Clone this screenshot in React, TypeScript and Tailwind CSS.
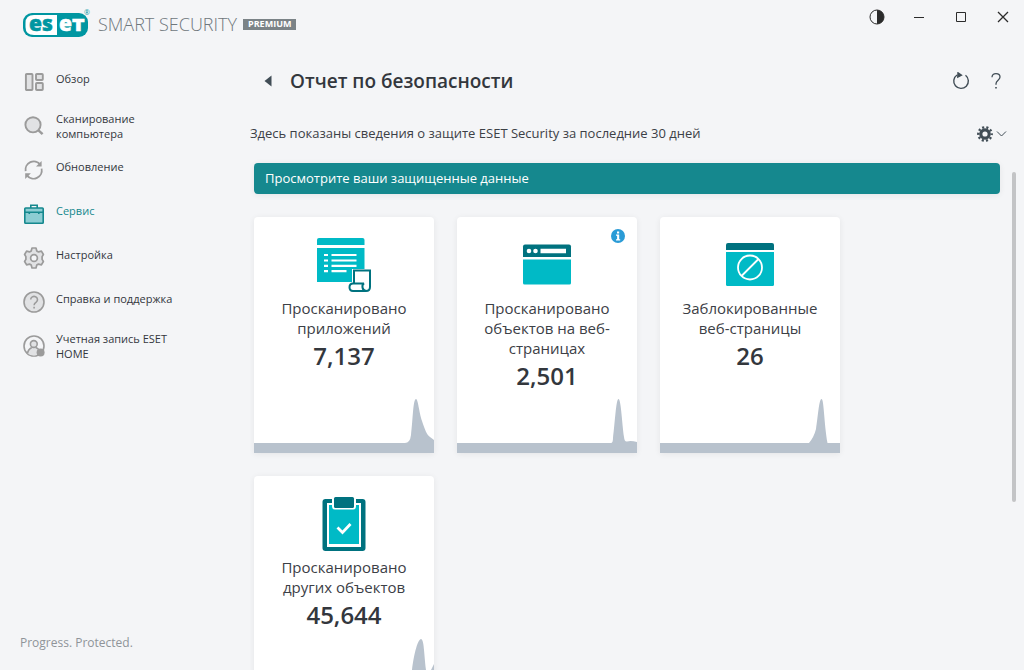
import React from 'react';
import clsx from 'clsx';

const OverviewIcon = () => (
  <svg viewBox="0 0 22 22" className="size-[22px]" fill="#e1e2e4" stroke="#9b9b9b" strokeWidth="1.9">
    <rect x="2.9" y="3" width="6.6" height="16" rx="0.8" />
    <rect x="13" y="3" width="6.8" height="6" rx="0.8" />
    <rect x="13" y="12" width="6.8" height="7" rx="0.8" />
  </svg>
);

const ScanIcon = () => (
  <svg viewBox="0 0 22 22" className="size-[22px]" fill="#e1e2e4" stroke="#9b9b9b">
    <circle cx="10" cy="9.8" r="7.6" strokeWidth="1.9" />
    <path d="M15.2 15.2l4.4 4" strokeWidth="2.5" />
  </svg>
);

const UpdateIcon = () => (
  <svg viewBox="0 0 22 22" className="size-[22px]" fill="none" stroke="#9b9b9b" strokeWidth="1.8">
    <path d="M2.6 12.2A8.3 8.3 0 0 1 17.3 5.6" />
    <path d="M18.6 9.6A8.3 8.3 0 0 1 3.9 16.4" />
    <path d="M18.6 2v5.6h-5.6z" fill="#9b9b9b" stroke="none" />
    <path d="M2.2 20v-5.8h5.7z" fill="#9b9b9b" stroke="none" />
  </svg>
);

const ToolsIcon = () => (
  <svg viewBox="0 0 22 22" className="size-[22px]" fill="#8ccdd3" stroke="#15888e" strokeWidth="1.6">
    <path d="M7.8 5V2.3h6.4V5" fill="none" />
    <rect x="1.8" y="5" width="18.4" height="15.2" rx="0.8" />
    <path d="M1.8 9.3h18.4M6.3 9.3v1.8M15.8 9.3v1.8" />
  </svg>
);

const SetupIcon = () => (
  <svg viewBox="0 0 22 22" className="size-[22px]" fill="#e1e2e4" stroke="#9b9b9b" strokeWidth="1.7" strokeLinejoin="round">
    <path d="M9 1h4l.8 2.9 1.7 1 2.9-.8 2 3.4-1.3 2.1v2.8l1.3 2.1-2 3.4-2.9-.8-1.7 1L13 21H9l-.8-2.9-1.7-1-2.9.8-2-3.4 1.3-2.1V9.6L1.6 7.5l2-3.4 2.9.8 1.7-1z" />
    <circle cx="11" cy="11" r="3.4" fill="#f4f5f7" />
  </svg>
);

const HelpIcon = () => (
  <svg viewBox="0 0 22 22" className="size-[22px]" fill="none" stroke="#9b9b9b" strokeWidth="1.6">
    <circle cx="11" cy="11" r="10" fill="#e1e2e4" />
    <path d="M7.7 8.6a3.4 3.2 0 1 1 5.5 2.5c-1.5 1-2.1 1.5-2.1 3.2" />
    <path d="M11.1 15.7v1.8" />
  </svg>
);

const AccountIcon = () => (
  <svg viewBox="0 0 22 22" className="size-[22px]" fill="none" stroke="#9b9b9b" strokeWidth="1.6">
    <circle cx="11" cy="11" r="10" />
    <path d="M4.5 18.6c.3-3 2-5 4.3-6.1h4c1.200.5 2.200 1.200 2.900 2l-2 5.500q-5 1.500-9.200-1.400z" fill="#e1e2e4" stroke="none" />
    <circle cx="10.800" cy="9" r="3.400" fill="#e1e2e4" />
    <path d="M4.500 18.600c.3-3 2-5 4.300-6.100M12.800 12.500c1.200.5 2.200 1.200 2.900 2" />
    <circle cx="17.600" cy="17.400" r="4" fill="#9b9b9b" stroke="none" />
  </svg>
);

const AppsIcon = () => (
  <svg viewBox="0 0 56 56" className="size-14">
    <path d="M1 8V3q0-2 2-2h43.500q2 0 2 2v5z" fill="#00bac6" />
    <path d="M1 11h47.500v21H36v13H1z" fill="#00bac6" />
    <path d="M8 18h4M8 23.500h4M8 28.800h4M8 34.200h4M15.500 18h25M15.500 23.500h25M15.500 28.800h25M15.500 34.200h15" stroke="#fff" strokeWidth="2.200" />
    <path d="M38 46.500V33.500h16V50q0 4-4 4H37q-3.500 0-3.500-3.700T37 46.500h11q-2 1-1.500 4t3.500 3.500" fill="#fff" stroke="#00727f" strokeWidth="2" />
  </svg>
);

const WebObjectsIcon = () => (
  <svg viewBox="0 0 56 56" className="size-14">
    <path d="M4 20V9.500q0-2 2-2h44q2 0 2 2V20z" fill="#00727f" />
    <path d="M4 22.500h48V46q0 1.500-1.500 1.500h-45Q4 47.500 4 46z" fill="#00bac6" />
    <circle cx="10" cy="14" r="2.300" fill="#fff" />
    <circle cx="16.500" cy="14" r="2.300" fill="#fff" />
    <path d="M21.500 11.800H47v4.400H21.500z" fill="#fff" />
  </svg>
);

const BlockedIcon = () => (
  <svg viewBox="0 0 56 56" className="size-14">
    <path d="M4 13V8q0-2 2-2h44q2 0 2 2v5z" fill="#00727f" />
    <path d="M4 15h48v32.500q0 1.500-1.500 1.500h-45Q4 49 4 47.500z" fill="#00bac6" />
    <g fill="none" stroke="#fff" strokeWidth="1.800">
      <circle cx="28" cy="30.500" r="12" />
      <path d="M19.500 39l17-17" />
    </g>
  </svg>
);

const OtherIcon = () => (
  <svg viewBox="0 0 56 56" className="size-14">
    <rect x="6.500" y="3" width="43" height="52" rx="3" fill="#00727f" />
    <path d="M11 7h34v44H11z" fill="#fff" />
    <path d="M13 9h30v39H13z" fill="#00bac6" />
    <path d="M16 1h24v9q0 3.500-3 3.500H19q-3 0-3-3.500z" fill="#fff" />
    <rect x="18" y="1" width="20" height="11" rx="1.500" fill="#00727f" />
    <path d="M21.500 31.500l5 5 8-8.500" fill="none" stroke="#fff" strokeWidth="2.800" />
  </svg>
);

const navItems = [
  { label: 'Обзор', icon: OverviewIcon },
  { label: 'Сканирование компьютера', icon: ScanIcon, twoLines: true },
  { label: 'Обновление', icon: UpdateIcon },
  { label: 'Сервис', icon: ToolsIcon, active: true },
  { label: 'Настройка', icon: SetupIcon },
  { label: 'Справка и поддержка', icon: HelpIcon },
  { label: 'Учетная запись ESET HOME', icon: AccountIcon, twoLines: true },
];

const cards = [
  {
    title: 'Просканировано приложений',
    value: '7,137',
    icon: AppsIcon,
    chartHeight: 54,
    chart: 'M0 44H151Q156 44 157 36C159 20 159 0 162 0C164 0 165 13 168 22C171 31 173 36 176 38L180 41V54H0Z',
  },
  {
    title: 'Просканировано объектов на веб-страницах',
    value: '2,501',
    icon: WebObjectsIcon,
    info: true,
    chartHeight: 54,
    chart: 'M0 44H154Q156 44 156 39C158 24 159 0 161.500 0C164 0 165 24 167 38Q167.500 43 170 42.500Q174 41.500 180 43V54H0Z',
  },
  {
    title: 'Заблокированные веб-страницы',
    value: '26',
    icon: BlockedIcon,
    chartHeight: 54,
    chart: 'M0 44H149Q154 38 156 30C158 18 159 0 161.500 0C164 0 164 24 167.500 44H180V54H0Z',
  },
  {
    title: 'Просканировано других объектов',
    value: '45,644',
    icon: OtherIcon,
    chartHeight: 73,
    chart: 'M0 63H150Q156 60 158 31C160 14 164 0 167 0C170 0 170 14 172 31L174 44L177 31L180 25V73H0Z',
  },
];

const Logo = () => (
  <svg viewBox="0 0 68 30" className="h-[30px] w-[68px]" role="img" aria-label="ESET">
    <rect x="0" y="4" width="65" height="24" rx="9" fill="#0096a1" />
    <path d="M34 6H11Q2.500 6 2.500 14v4Q2.500 26 11 26H34z" fill="#fff" />
    <g fontSize="21" fontWeight="800" fontFamily="Open Sans, sans-serif" strokeWidth="0.5">
      <text x="6" y="22" fill="#0096a1" stroke="#0096a1">es</text>
      <text x="36" y="22" fill="#fff" stroke="#fff">eт</text>
    </g>
    <text x="61" y="6" fontSize="7" fontFamily="Open Sans, sans-serif" fill="#0096a1">®</text>
  </svg>
);

const Header = () => (
  <header className="flex h-[50px] shrink-0 items-start justify-between pl-[23px]">
    <div className="flex h-12 items-center">
      <Logo />
      <span className="ml-[7px] text-[18px] text-[#6f777c] font-light">SMART SECURITY</span>
      <span className="ml-1.5 flex h-[11px] items-center bg-[#7b8387] px-[5px] text-[9px] font-bold text-white">PREMIUM</span>
    </div>
    <div className="flex h-[34px] items-center text-[#2b2b2b]">
      <button aria-label="Тема" className="flex w-[42px] justify-center">
        <svg viewBox="0 0 16 16" className="size-4">
          <circle cx="8" cy="8" r="7" fill="none" stroke="currentColor" />
          <path d="M8 1a7 7 0 0 1 0 14z" fill="currentColor" />
        </svg>
      </button>
      <button aria-label="Свернуть" className="flex w-[42px] justify-center">
        <svg viewBox="0 0 12 12" className="size-3" stroke="currentColor"><path d="M1 6.500h10" /></svg>
      </button>
      <button aria-label="Развернуть" className="flex w-[42px] justify-center">
        <svg viewBox="0 0 12 12" className="size-3" fill="none" stroke="currentColor"><path d="M1.500 1.500h9v9h-9z" /></svg>
      </button>
      <button aria-label="Закрыть" className="flex w-[42px] justify-center">
        <svg viewBox="0 0 12 12" className="size-3" stroke="currentColor" strokeWidth="1.300"><path d="M1 1l10 10M11 1L1 11" /></svg>
      </button>
    </div>
  </header>
);

const Sidebar = () => (
  <aside className="flex w-[250px] shrink-0 flex-col justify-between pt-2.5">
    <nav className="flex flex-col">
      {navItems.map(({ label, icon: Icon, active, twoLines }) => (
        <a key={label} href="#" className="flex h-11 items-start pl-[23px]">
          <span className="pt-[11px]"><Icon /></span>
          <span
            className={clsx(
              'ml-[11px] w-[124px] text-[11px] leading-[15px]',
              twoLines ? 'pt-[7px]' : 'pt-[11px]',
              active ? 'text-[#15888e]' : 'text-[#33373d]'
            )}
          >
            {label}
          </span>
        </a>
      ))}
    </nav>
    <p className="pb-[18px] pl-5 text-[12px] leading-[18px] font-medium text-[#8f9499]">Progress. Protected.</p>
  </aside>
);

const Card = ({ title, value, icon: Icon, info, chart, chartHeight }: (typeof cards)[number]) => (
  <article className="relative flex h-[236px] flex-col items-center overflow-hidden rounded-t-[4px] bg-white pt-5 shadow-[0_1px_6px_rgba(0,0,0,0.07)]">
    <Icon />
    <h2 className="mt-[5px] w-[136px] text-center text-[15px] leading-5 text-[#3c4046]">{title}</h2>
    <p className="text-[24px] leading-[35px] font-semibold text-[#33373d]">{value}</p>
    {info && (
      <button aria-label="Сведения" className="absolute top-3 right-3">
        <svg viewBox="0 0 14 14" className="size-3.5">
          <circle cx="7" cy="7" r="7" fill="#2a9bd6" />
          <path d="M6 2.500h2.200v2H6zM5 5.600h3.200v4.600h1v1.200H5v-1.200h1.100V6.800H5z" fill="#fff" />
        </svg>
      </button>
    )}
    <svg viewBox={`0 0 180 ${chartHeight}`} className="mt-auto w-full shrink-0" fill="#b8c2cd">
      <path d={chart} />
    </svg>
  </article>
);

const App = () => {
  return (
    <div className="flex h-screen flex-col overflow-hidden bg-[#f4f5f7] font-['Open_Sans','Noto_Sans',sans-serif]">
      <Header />
      <div className="flex min-h-0 flex-1">
        <Sidebar />
        <main className="flex min-w-0 flex-1 flex-col">
          <div className="flex h-[62px] shrink-0 items-center pr-[22px] pl-3.5 text-[#414d56]">
            <button aria-label="Назад">
              <svg viewBox="0 0 8 12" className="h-3 w-2" fill="currentColor"><path d="M7.500 0.500v11L0.500 6z" /></svg>
            </button>
            <h1 className="ml-[18px] flex-1 text-[19px] font-semibold text-[#33373d]">Отчет по безопасности</h1>
            <button aria-label="Обновить">
              <svg viewBox="0 0 18 18" className="size-[18px]" fill="none" stroke="currentColor" strokeWidth="1.400">
                <path d="M13.500 3.300A7.300 7.300 0 1 1 5 3" />
                <path d="M6 0.800l3.400 2.400-3.600 1.800z" fill="currentColor" />
              </svg>
            </button>
            <button aria-label="Справка" className="ml-5">
              <svg viewBox="0 0 12 18" className="h-[18px] w-3" fill="none" stroke="currentColor" strokeWidth="1.300">
                <path d="M2 5.200C2 2.800 3.700 1.600 6 1.600s4 1.300 4 3.500C10 8.300 6 8.200 6 11.800v1" />
                <path d="M6 15v1.600" strokeWidth="1.600" />
              </svg>
            </button>
          </div>
          <div className="flex h-[43px] shrink-0 items-center justify-between pr-[17px] text-[#414d56]">
            <p className="pt-px text-[13px] text-[#3c4046]">Здесь показаны сведения о защите ESET Security за последние 30 дней</p>
            <button aria-label="Параметры" className="flex items-center gap-[3px]">
              <svg viewBox="0 0 16 16" className="size-4" fill="none" stroke="currentColor">
                <circle cx="8" cy="8" r="4.200" strokeWidth="3.200" />
                <circle cx="8" cy="8" r="6.700" strokeWidth="2.400" strokeDasharray="2.100 2.110" strokeDashoffset="1" />
              </svg>
              <svg viewBox="0 0 11 8" className="h-2 w-[11px]" fill="none" stroke="currentColor"><path d="M1 1.500l4.500 4.500L10 1.500" /></svg>
            </button>
          </div>
          <div className="flex min-h-0 flex-1 overflow-hidden pr-2 pl-1">
            <div className="min-w-0 flex-1 pt-2">
              <button className="block h-[31px] w-full rounded-[4px] bg-[#15888e] px-[11px] text-left text-[13px] text-white shadow-[0_1px_6px_rgba(0,0,0,0.07)]">
                Просмотрите ваши защищенные данные
              </button>
              <div className="mt-[23px] grid grid-cols-[repeat(auto-fill,180px)] gap-[23px]">
                {cards.map((card) => (
                  <Card key={card.title} {...card} />
                ))}
              </div>
            </div>
            <div className="mt-[17px] ml-3 h-[64%] w-1 rounded-full bg-[#c3c4c6]" />
          </div>
        </main>
      </div>
    </div>
  );
};

export default App;
